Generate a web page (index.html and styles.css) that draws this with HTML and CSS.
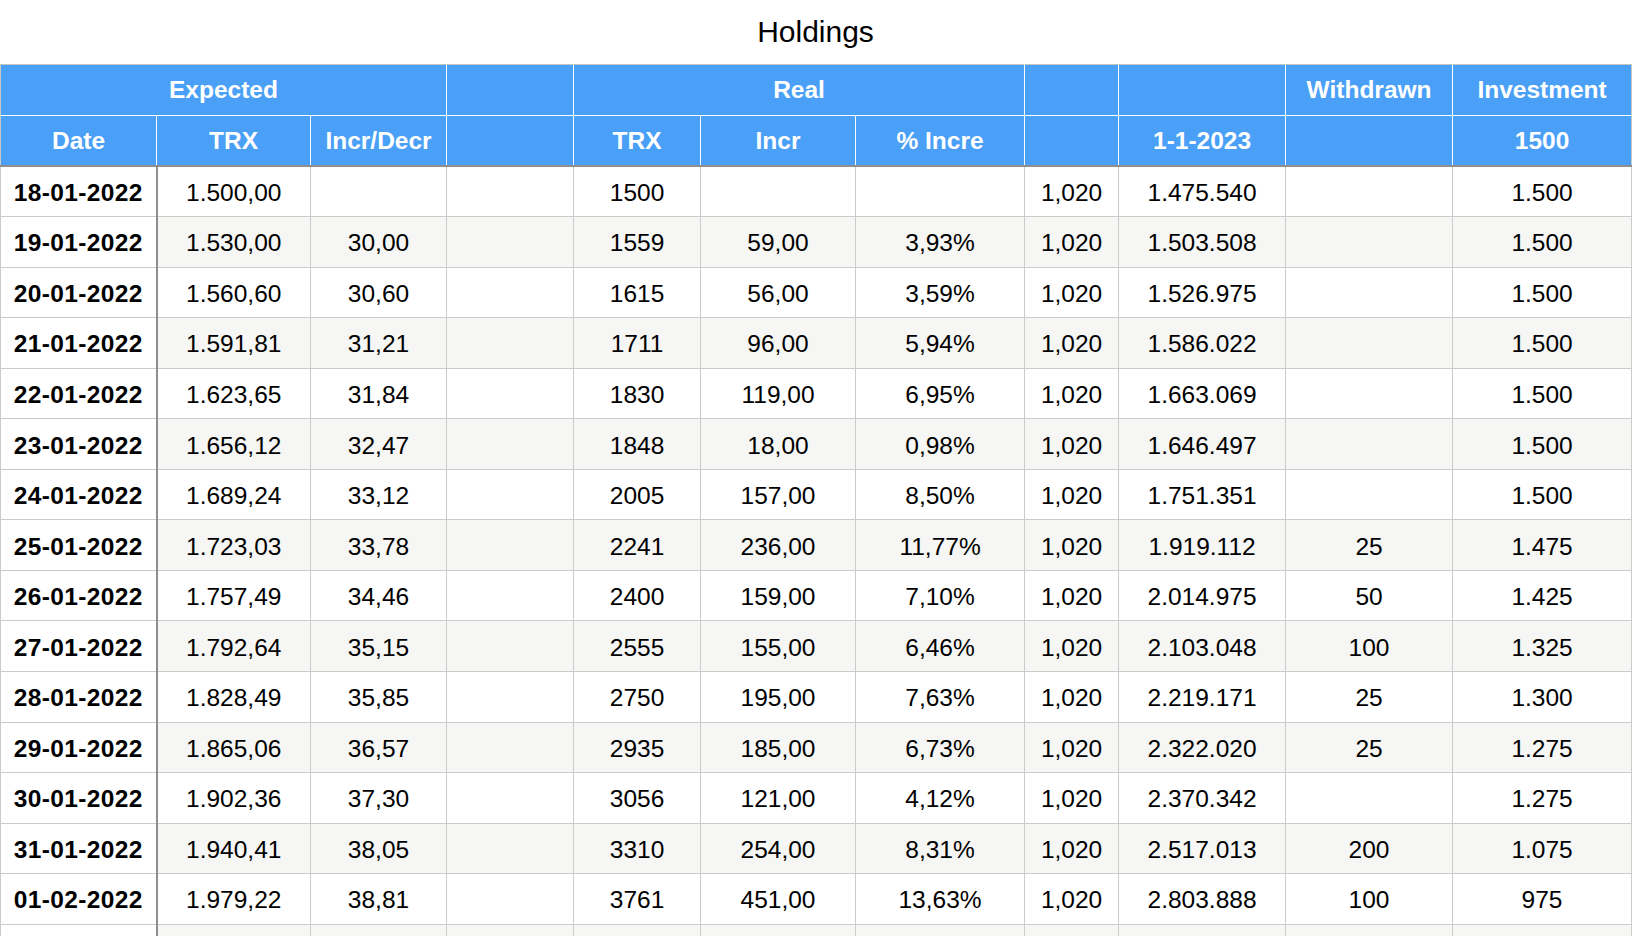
FILE: index.html
```html
<!DOCTYPE html>
<html lang="en">
<head>
<meta charset="utf-8">
<title>Holdings</title>
<link rel="stylesheet" href="styles.css">
</head>
<body>
<div class="sheet">
  <div class="title">Holdings</div>
  <table class="grid">
    <colgroup>
      <col class="c-date"><col class="c-etrx"><col class="c-eincr"><col class="c-blank">
      <col class="c-rtrx"><col class="c-rincr"><col class="c-pct"><col class="c-rate">
      <col class="c-val"><col class="c-wd"><col class="c-inv">
    </colgroup>
    <thead>
      <tr class="h1">
        <th colspan="3">Expected</th>
        <th></th>
        <th colspan="3">Real</th>
        <th></th>
        <th></th>
        <th>Withdrawn</th>
        <th>Investment</th>
      </tr>
      <tr class="h2">
        <th>Date</th><th>TRX</th><th>Incr/Decr</th><th></th>
        <th>TRX</th><th>Incr</th><th>% Incre</th><th></th>
        <th>1-1-2023</th><th></th><th>1500</th>
      </tr>
    </thead>
    <tbody>
      <tr><td>18-01-2022</td><td>1.500,00</td><td></td><td></td><td>1500</td><td></td><td></td><td>1,020</td><td>1.475.540</td><td></td><td>1.500</td></tr>
      <tr><td>19-01-2022</td><td>1.530,00</td><td>30,00</td><td></td><td>1559</td><td>59,00</td><td>3,93%</td><td>1,020</td><td>1.503.508</td><td></td><td>1.500</td></tr>
      <tr><td>20-01-2022</td><td>1.560,60</td><td>30,60</td><td></td><td>1615</td><td>56,00</td><td>3,59%</td><td>1,020</td><td>1.526.975</td><td></td><td>1.500</td></tr>
      <tr><td>21-01-2022</td><td>1.591,81</td><td>31,21</td><td></td><td>1711</td><td>96,00</td><td>5,94%</td><td>1,020</td><td>1.586.022</td><td></td><td>1.500</td></tr>
      <tr><td>22-01-2022</td><td>1.623,65</td><td>31,84</td><td></td><td>1830</td><td>119,00</td><td>6,95%</td><td>1,020</td><td>1.663.069</td><td></td><td>1.500</td></tr>
      <tr><td>23-01-2022</td><td>1.656,12</td><td>32,47</td><td></td><td>1848</td><td>18,00</td><td>0,98%</td><td>1,020</td><td>1.646.497</td><td></td><td>1.500</td></tr>
      <tr><td>24-01-2022</td><td>1.689,24</td><td>33,12</td><td></td><td>2005</td><td>157,00</td><td>8,50%</td><td>1,020</td><td>1.751.351</td><td></td><td>1.500</td></tr>
      <tr><td>25-01-2022</td><td>1.723,03</td><td>33,78</td><td></td><td>2241</td><td>236,00</td><td>11,77%</td><td>1,020</td><td>1.919.112</td><td>25</td><td>1.475</td></tr>
      <tr><td>26-01-2022</td><td>1.757,49</td><td>34,46</td><td></td><td>2400</td><td>159,00</td><td>7,10%</td><td>1,020</td><td>2.014.975</td><td>50</td><td>1.425</td></tr>
      <tr><td>27-01-2022</td><td>1.792,64</td><td>35,15</td><td></td><td>2555</td><td>155,00</td><td>6,46%</td><td>1,020</td><td>2.103.048</td><td>100</td><td>1.325</td></tr>
      <tr><td>28-01-2022</td><td>1.828,49</td><td>35,85</td><td></td><td>2750</td><td>195,00</td><td>7,63%</td><td>1,020</td><td>2.219.171</td><td>25</td><td>1.300</td></tr>
      <tr><td>29-01-2022</td><td>1.865,06</td><td>36,57</td><td></td><td>2935</td><td>185,00</td><td>6,73%</td><td>1,020</td><td>2.322.020</td><td>25</td><td>1.275</td></tr>
      <tr><td>30-01-2022</td><td>1.902,36</td><td>37,30</td><td></td><td>3056</td><td>121,00</td><td>4,12%</td><td>1,020</td><td>2.370.342</td><td></td><td>1.275</td></tr>
      <tr><td>31-01-2022</td><td>1.940,41</td><td>38,05</td><td></td><td>3310</td><td>254,00</td><td>8,31%</td><td>1,020</td><td>2.517.013</td><td>200</td><td>1.075</td></tr>
      <tr><td>01-02-2022</td><td>1.979,22</td><td>38,81</td><td></td><td>3761</td><td>451,00</td><td>13,63%</td><td>1,020</td><td>2.803.888</td><td>100</td><td>975</td></tr>
      <tr><td></td><td></td><td></td><td></td><td></td><td></td><td></td><td></td><td></td><td></td><td></td></tr>
    </tbody>
  </table>
</div>
</body>
</html>
```

FILE: styles.css
```css
html, body {
  margin: 0;
  padding: 0;
  background: #ffffff;
  overflow: hidden;
}

body {
  font-family: "Liberation Sans", Arial, Helvetica, sans-serif;
  color: #000000;
}

.sheet {
  width: 1631px;
}

.title {
  height: 64px;
  line-height: 63px;
  font-size: 30px;
  text-align: center;
  color: #000000;
}

.grid {
  width: 1631px;
  table-layout: fixed;
  border-collapse: collapse;
  border-spacing: 0;
  font-size: 24.5px;
}

.c-date { width: 156px; }
.c-etrx { width: 154px; }
.c-eincr { width: 136px; }
.c-blank { width: 127px; }
.c-rtrx { width: 127px; }
.c-rincr { width: 155px; }
.c-pct { width: 169px; }
.c-rate { width: 94px; }
.c-val { width: 167px; }
.c-wd { width: 167px; }
.c-inv { width: 179px; }

.grid th,
.grid td {
  padding: 0;
  text-align: center;
  vertical-align: middle;
  white-space: nowrap;
  overflow: hidden;
}

.grid th {
  background: #4a9ff6;
  color: #ffffff;
  font-weight: bold;
  border: 1px solid #ffffff;
  padding-top: 1px;
}

.grid .h1 th {
  height: 48.5px;
  border-top: 1px solid #c4c4c4;
}

.grid .h2 th {
  height: 48px;
  border-bottom: 2px solid #8e8e8e;
}

.grid th:first-child {
  border-left: 1px solid #c8c8c8;
}

.grid th:last-child {
  border-right: 1px solid #c8c8c8;
}

.grid td {
  height: 46.55px;
  padding-top: 3px;
  border: 1px solid #cbcbcb;
  background: #ffffff;
}

.grid tbody tr:nth-child(even) td {
  background: #f6f6f4;
}

.grid tbody tr td:first-child {
  font-weight: bold;
  letter-spacing: 0.35px;
  background: #ffffff;
  border-right: 2px solid #8e8e8e;
}
```
